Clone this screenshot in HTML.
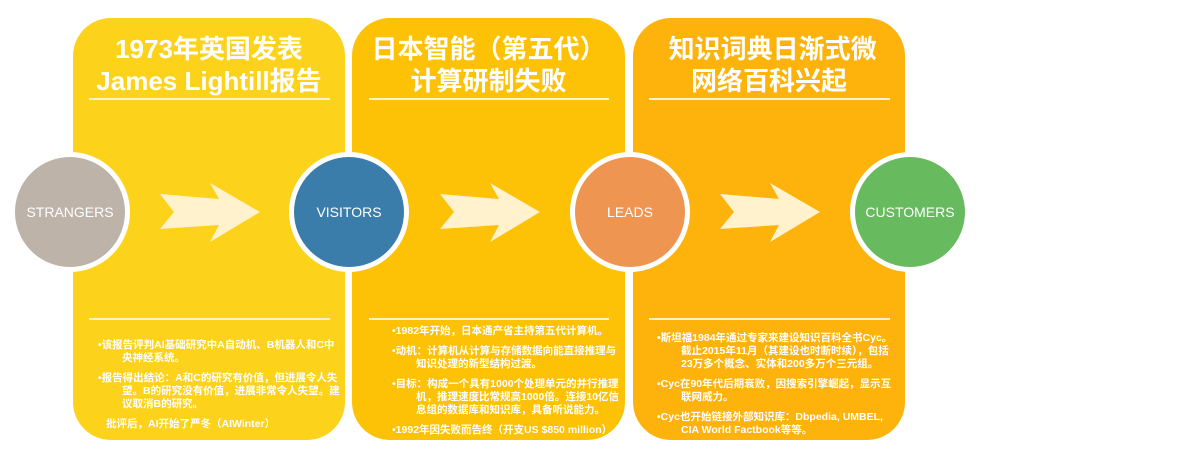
<!DOCTYPE html>
<html><head><meta charset="utf-8"><style>
*{margin:0;padding:0;box-sizing:border-box}
body{width:1181px;height:458px;background:#fff;position:relative;overflow:hidden;font-family:"Liberation Sans","Noto Sans CJK SC",sans-serif}
.p{position:absolute;top:18px;height:422px;border-radius:38px}
.t{position:absolute;top:15px;left:0;width:100%;text-align:center;color:#fff;font-weight:bold;font-size:26px;line-height:32px}
.u{position:absolute;top:98px;height:2px;background:#fff3c8}
.c{position:absolute;top:152px;width:120px;height:120px;border-radius:50%;border:5px solid #fff;color:#fff;font-size:14px;display:flex;align-items:center;justify-content:center}
.b{position:absolute;color:#fff;font-size:10.5px;font-weight:bold;line-height:13px}
.b div{padding-left:24px;text-indent:-24px;margin-bottom:7px}
svg{position:absolute;top:183px}
</style></head><body>
<div class="p" style="left:73px;width:272px;background:#fdd21b"><div class="t">1973年英国发表<br>James Lightill报告</div></div>
<div class="p" style="left:352px;width:273px;background:#fdc105"><div class="t">日本智能（第五代）<br>计算研制失败</div></div>
<div class="p" style="left:633px;width:272px;background:#fdb30b"><div class="t">&nbsp;知识词典日渐式微<br>网络百科兴起</div></div>
<div class="u" style="left:89px;width:241px"></div>
<div class="u" style="left:369px;width:240px"></div>
<div class="u" style="left:649px;width:241px"></div>
<div class="u" style="left:89px;width:241px;top:318px"></div>
<div class="u" style="left:369px;width:240px;top:318px"></div>
<div class="u" style="left:649px;width:241px;top:318px"></div>
<div class="c" style="left:10px;background:#bdb3a9">STRANGERS</div>
<div class="c" style="left:289px;background:#3a7dab">VISITORS</div>
<div class="c" style="left:570px;background:#ef9552">LEADS</div>
<div class="c" style="left:850px;background:#68ba5e">CUSTOMERS</div>
<svg style="left:160px" width="100" height="60"><polygon points="0,11 59,16 50,0 100,29 50,59 59,42 0,46 14,29" fill="#fff2cc"/></svg>
<svg style="left:440px" width="100" height="60"><polygon points="0,11 59,16 50,0 100,29 50,59 59,42 0,46 14,29" fill="#fff2cc"/></svg>
<svg style="left:720px" width="100" height="60"><polygon points="0,11 59,16 50,0 100,29 50,59 59,42 0,46 14,29" fill="#fff2cc"/></svg>
<div class="b" style="left:98px;top:339px;width:246px">
<div>•该报告评判AI基础研究中A自动机、B机器人和C中央神经系统。</div>
<div>•报告得出结论：A和C的研究有价值，但进展令人失望。B的研究没有价值，进展非常令人失望。建议取消B的研究。</div>
<div style="padding-left:8px;text-indent:0">批评后，AI开始了严冬（AIWinter）</div>
</div>
<div class="b" style="left:392px;top:325px;width:232px">
<div>•1982年开始，日本通产省主持第五代计算机。</div>
<div>•动机：计算机从计算与存储数据向能直接推理与知识处理的新型结构过渡。</div>
<div>•目标：构成一个具有1000个处理单元的并行推理机，推理速度比常规高1000倍。连接10亿信息组的数据库和知识库，具备听说能力。</div>
<div>•1992年因失败而告终（开支US $850 million）</div>
</div>
<div class="b" style="left:657px;top:332px;width:238px">
<div>•斯坦福1984年通过专家来建设知识百科全书Cyc。截止2015年11月（其建设也时断时续），包括23万多个概念、实体和200多万个三元组。</div>
<div>•Cyc在90年代后期衰败，因搜索引擎崛起，显示互联网威力。</div>
<div>•Cyc也开始链接外部知识库：Dbpedia, UMBEL, CIA World Factbook等等。</div>
</div>
</body></html>
